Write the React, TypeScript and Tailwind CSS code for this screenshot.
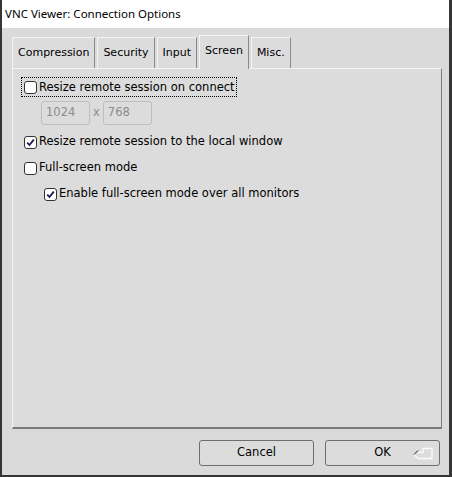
import React from 'react'

const font = { fontFamily: '"DejaVu Sans", Verdana, sans-serif' }

function Check({ checked }: { checked?: boolean }) {
  return (
    <span className="flex h-[13px] w-[13px] shrink-0 items-center justify-center rounded-[3px] border border-[#333] bg-white">
      {checked && (
        <svg width="9" height="9" viewBox="0 0 9 9">
          <path d="M1.2 4.6 L3.5 7 L7.8 1.6" fill="none" stroke="#1a1a50" strokeWidth="1.8" />
        </svg>
      )}
    </span>
  )
}

function Tab({ label, active }: { label: string; active?: boolean }) {
  return (
    <div
      className={
        'flex items-center border-l border-t border-r border-l-[#f4f4f4] border-t-[#f4f4f4] border-r-[#8a8a8a] bg-[#dcdcdc] px-[5px] text-[11px] ' +
        (active ? 'relative -mb-px h-[34px] pb-[2px] z-10' : 'h-[31px]')
      }
    >
      {label}
    </div>
  )
}

export default function App() {
  return (
    <div
      className="flex h-[477px] w-[452px] flex-col border-b-2 border-l-2 border-r-[3px] border-[#353535] bg-[#dadada] text-[11.5px] text-black"
      style={font}
    >
      <div
        className="flex h-[28px] shrink-0 items-center bg-white pl-[3px] text-[11.5px]"
        style={{ fontFamily: '"Noto Sans", "Open Sans", sans-serif' }}
      >
        VNC Viewer: Connection Options
      </div>

      <div className="flex flex-1 flex-col pl-[10px] pr-[7px] pt-[7px]">
        <div className="flex items-end gap-[2px]">
          <Tab label="Compression" />
          <Tab label="Security" />
          <Tab label="Input" />
          <Tab label="Screen" active />
          <Tab label="Misc." />
        </div>

        <div className="flex h-[361px] flex-col border-b-2 border-l border-r border-t border-b-[#7a7a7a] border-l-[#f4f4f4] border-r-[#7a7a7a] border-t-[#f4f4f4] bg-[#dcdcdc] pl-[8px] pt-[8px]">
          <div className="flex w-fit items-center gap-[2px] border border-dotted border-black py-[2px] pl-[2px] pr-[1px] leading-[14px]">
            <Check />
            <span>Resize remote session on connect</span>
          </div>

          <div className="mt-[4px] flex items-center gap-[3px] pl-[20px] text-[#8c8c8c]">
            <div className="flex h-[24px] w-[49px] items-center rounded-[3px] border border-[#bdbdbd] px-[4px]">1024</div>
            <span>x</span>
            <div className="flex h-[24px] w-[49px] items-center rounded-[3px] border border-[#bdbdbd] px-[4px]">768</div>
          </div>

          <div className="mt-[9px] flex h-[16px] items-center gap-[2px] pl-[3px]">
            <Check checked />
            <span>Resize remote session to the local window</span>
          </div>

          <div className="mt-[10px] flex h-[16px] items-center gap-[2px] pl-[3px]">
            <Check />
            <span>Full-screen mode</span>
          </div>

          <div className="mt-[10px] flex h-[16px] items-center gap-[2px] pl-[23px]">
            <Check checked />
            <span>Enable full-screen mode over all monitors</span>
          </div>
        </div>

        <div className="mt-[11px] flex justify-end gap-[11px] pr-[2px]">
          <button className="flex h-[26px] w-[115px] items-center justify-center rounded-[3px] border border-[#6e6e6e] bg-[#dcdcdc]">
            Cancel
          </button>
          <button className="relative flex h-[26px] w-[115px] items-center justify-center rounded-[3px] border border-[#6e6e6e] bg-[#dcdcdc]">
            OK
            <svg className="absolute right-[5px] top-[5px]" width="22" height="15" viewBox="0 0 22 15">
              <path d="M2 8.5 L6 12.5 H20 V2.5 H11 V6.5 H6" fill="none" stroke="#fbfbfb" strokeWidth="1.3" />
              <path d="M2 8.5 L6 4.5" stroke="#222" strokeWidth="1" />
            </svg>
          </button>
        </div>
      </div>
    </div>
  )
}
